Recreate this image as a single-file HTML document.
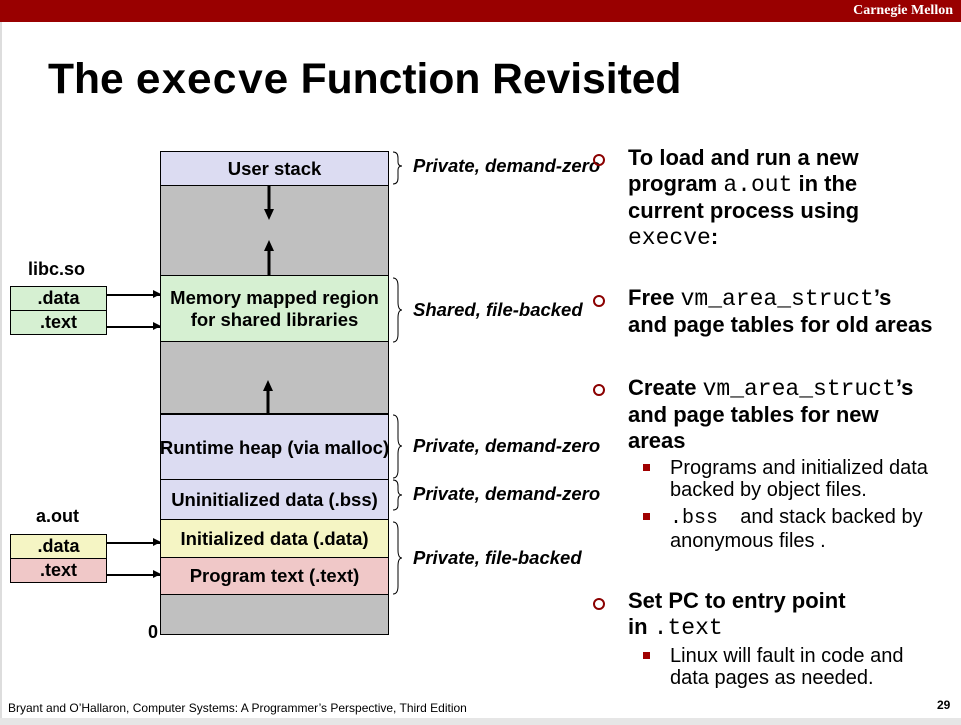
<!DOCTYPE html>
<html><head><meta charset="utf-8"><style>
body{margin:0;width:961px;height:725px;position:relative;background:#fff;overflow:hidden;font-family:"Liberation Sans",Arial,sans-serif}
.a{position:absolute}
.bar{left:0;top:0;width:961px;height:22px;background:#990000}
.cm{right:8px;top:3px;color:#fff;font:bold 14px "Liberation Serif",serif}
.title{left:48px;top:55px;font-weight:bold;font-size:43px;white-space:nowrap;transform-origin:0 0;transform:scaleX(0.99)}
.mono{font-family:"Liberation Mono",monospace;font-weight:normal}
.box{position:absolute;left:160px;width:227px;border:1px solid #000;box-sizing:content-box;display:flex;align-items:center;justify-content:center;text-align:center;font-weight:bold;font-size:18.5px;line-height:22px;white-space:nowrap}
.sm{position:absolute;left:10px;width:95px;border:1px solid #000;text-align:center;font-weight:bold;font-size:18px;line-height:23px}
.lab{position:absolute;font-weight:bold;font-style:italic;font-size:18.5px;white-space:nowrap}
.rt{position:absolute;left:628px;font-weight:bold;font-size:22px;line-height:26px;white-space:nowrap}
.rt .mono{font-weight:normal;font-size:23px}
.bul{position:absolute;left:593px;width:8px;height:8px;border:2.5px solid #8b0000;border-radius:50%}
.sq{position:absolute;left:643px;width:7px;height:7px;background:#a00000}
.st{position:absolute;left:670px;font-size:20px;line-height:22px;white-space:nowrap}
.arr{position:absolute;height:1.5px;background:#000}
.arr:after{content:"";position:absolute;right:-1px;top:-4px;border-left:8px solid #000;border-top:4.5px solid transparent;border-bottom:4.5px solid transparent}
</style></head><body>
<div class="a bar"></div><div class="a cm">Carnegie Mellon</div>
<div class="a" style="left:0;top:22px;width:2px;height:700px;background:#ddd"></div>
<div class="a title">The <span class="mono" style="font-weight:bold">execve</span> Function Revisited</div>

<div class="a" style="left:160px;top:151px;width:227px;height:482px;background:#c0c0c0;border:1px solid #000"></div>
<div class="box" style="top:151px;height:33px;background:#dcdcf2">User stack</div>
<div class="box" style="top:275px;height:65px;background:#d6f0d2">Memory mapped region<br>for shared libraries</div>
<div class="box" style="top:413px;height:65px;background:#dcdcf2;border-top:2px solid #000">Runtime heap (via malloc)</div>
<div class="box" style="top:479px;height:39px;background:#dcdcf2">Uninitialized data (.bss)</div>
<div class="box" style="top:519px;height:37px;background:#f5f5c4">Initialized data (.data)</div>
<div class="box" style="top:557px;height:36px;background:#f0c8c8">Program text (.text)</div>
<div class="a" style="left:148px;top:622px;font-weight:bold;font-size:18px">0</div>

<svg class="a" style="left:255px;top:185px" width="30" height="230">
<g fill="#000" stroke="#000" stroke-width="3">
<line x1="14" y1="0" x2="14" y2="26"/><polygon points="9,24 19,24 14,35" stroke-width="0"/>
<line x1="14" y1="90" x2="14" y2="64"/><polygon points="9,66 19,66 14,55" stroke-width="0"/>
<line x1="13" y1="228" x2="13" y2="204"/><polygon points="8,206 18,206 13,195" stroke-width="0"/>
</g></svg>

<div class="a" style="left:28px;top:259px;font-weight:bold;font-size:18px">libc.so</div>
<div class="sm" style="top:286px;background:#d6f0d2">.data</div>
<div class="sm" style="top:310px;background:#d6f0d2">.text</div>
<div class="a" style="left:36px;top:506px;font-weight:bold;font-size:18px">a.out</div>
<div class="sm" style="top:534px;background:#f5f5c4">.data</div>
<div class="sm" style="top:558px;background:#f0c8c8">.text</div>
<div class="arr" style="left:107px;top:294px;width:53px"></div>
<div class="arr" style="left:107px;top:326px;width:53px"></div>
<div class="arr" style="left:107px;top:542px;width:53px"></div>
<div class="arr" style="left:107px;top:574px;width:53px"></div>

<svg class="a" style="left:390px;top:150px" width="14" height="500" fill="none" stroke="#000" stroke-width="1">
<path d="M3,2 Q8,2 8,8 L8,12 Q8,16 12,16 Q8,16 8,20 L8,28 Q8,34 3,34"/>
<path d="M3,128 Q8,128 8,136 L8,152 Q8,160 12,160 Q8,160 8,168 L8,184 Q8,192 3,192"/>
<path d="M3,265 Q8,265 8,273 L8,288 Q8,296 12,296 Q8,296 8,304 L8,320 Q8,328 3,328"/>
<path d="M3,330 Q8,330 8,336 L8,340 Q8,345 12,345 Q8,345 8,350 L8,355 Q8,360 3,360"/>
<path d="M3,372 Q8,372 8,380 L8,400 Q8,408 12,408 Q8,408 8,416 L8,436 Q8,444 3,444"/>
</svg>
<div class="lab" style="left:413px;top:155px">Private, demand-zero</div>
<div class="lab" style="left:413px;top:299px">Shared, file-backed</div>
<div class="lab" style="left:413px;top:435px">Private, demand-zero</div>
<div class="lab" style="left:413px;top:483px">Private, demand-zero</div>
<div class="lab" style="left:413px;top:547px">Private, file-backed</div>

<div class="bul" style="top:154px"></div>
<div class="rt" style="top:145px">To load and run a new<br>program <span class="mono">a.out</span> in the<br>current process using<br><span class="mono">execve</span>:</div>
<div class="bul" style="top:295px"></div>
<div class="rt" style="top:285px">Free <span class="mono">vm_area_struct</span>’s<br>and page tables for old areas</div>
<div class="bul" style="top:384px"></div>
<div class="rt" style="top:375px">Create <span class="mono">vm_area_struct</span>’s<br>and page tables for new<br>areas</div>
<div class="sq" style="top:464px"></div>
<div class="st" style="top:457px">Programs and initialized data<br>backed by object files.</div>
<div class="sq" style="top:513px"></div>
<div class="st" style="top:506px"><span class="mono">.bss</span>&nbsp;&nbsp;&nbsp; and stack backed by<br>anonymous files .</div>
<div class="bul" style="top:598px"></div>
<div class="rt" style="top:588px">Set PC to entry point<br>in <span class="mono">.text</span></div>
<div class="sq" style="top:652px"></div>
<div class="st" style="top:645px">Linux will fault in code and<br>data pages as needed.</div>

<div class="a" style="left:8px;top:701px;font-size:12px">Bryant and O’Hallaron, Computer Systems: A Programmer’s Perspective, Third Edition</div>
<div class="a" style="left:937px;top:698px;font-size:12px;font-weight:bold">29</div>
<div class="a" style="left:0;top:718px;width:961px;height:7px;background:#e6e6e6"></div>
</body></html>
